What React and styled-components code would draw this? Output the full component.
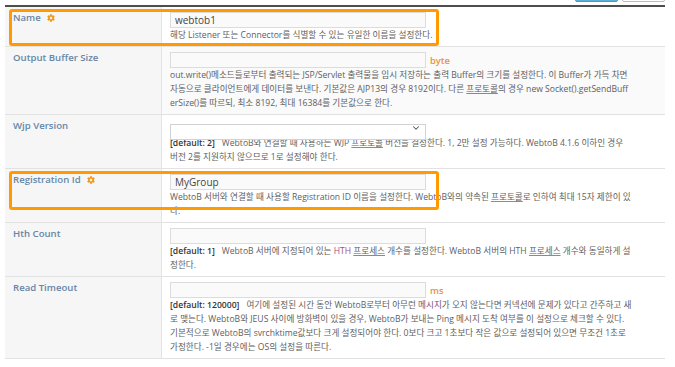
import React from 'react';
import styled, { createGlobalStyle } from 'styled-components';
import { FaCog } from 'react-icons/fa';
import { ChevronDown } from 'lucide-react';

const GlobalStyle = createGlobalStyle`
  body {
    margin: 0;
    background: #ffffff;
    font-family: "Open Sans", "Noto Sans CJK KR", sans-serif;
  }
`;

const Page = styled.div`
  width: 660px;
  padding-left: 5px;
`;

const Toolbar = styled.div`
  height: 5px;
  display: flex;
  justify-content: flex-end;
  align-items: flex-end;
  gap: 4px;
  overflow: hidden;
`;

const ToolButton = styled.button`
  flex: none;
  width: 43px;
  height: 20px;
  margin-bottom: 3px;
  border-radius: 2px;
  border: 1px solid ${(p) => (p.$primary ? '#4a9cc4' : '#bdbdbd')};
  background: ${(p) => (p.$primary ? '#5aaed6' : '#ffffff')};
`;

const Table = styled.div`
  border-top: 2px solid #4d4d4d;
`;

const Row = styled.div`
  position: relative;
  display: grid;
  grid-template-columns: 157px 1fr;
  border-bottom: 1px solid #e2e2e2;
`;

const Label = styled.div`
  display: flex;
  align-items: flex-start;
  gap: 6px;
  padding: 4px 8px;
  background: #f6f6f6;
  border-right: 1px solid #e4e4e4;
  font-size: 9.6px;
  font-weight: 600;
  line-height: 14px;
  color: #6686a8;
`;

const Gear = styled(FaCog)`
  margin-top: 3px;
  color: #f39a1e;
`;

const Value = styled.div`
  padding: 5px 6px 4px 8px;
  background: ${(p) => (p.$tint ? '#fafafa' : '#ffffff')};
`;

const Field = styled.div`
  display: flex;
  align-items: center;
  gap: 4px;
  height: 16px;
`;

const Input = styled.input`
  box-sizing: border-box;
  width: 256px;
  height: 16px;
  padding: 0 4px;
  border: 1px solid #dcdcdc;
  background: #fafafa;
  font-family: inherit;
  font-size: 10px;
  color: #444444;
  outline: none;
`;

const SelectBox = styled.div`
  position: relative;
  width: 256px;
  height: 16px;
`;

const Select = styled.select`
  box-sizing: border-box;
  appearance: none;
  width: 100%;
  height: 100%;
  border: 1px solid #d2d2d2;
  border-radius: 0;
  background: #ffffff;
`;

const Chevron = styled(ChevronDown)`
  position: absolute;
  right: 5px;
  top: 3px;
  color: #555555;
  pointer-events: none;
`;

const Unit = styled.span`
  font-size: 9.4px;
  font-weight: 600;
  color: #ec9238;
`;

const Desc = styled.div`
  font-size: 8.6px;
  line-height: 14px;
  color: #606060;
`;

const Line = styled.span`
  display: block;
  white-space: nowrap;
`;

const Default = styled.span`
  margin-right: 7px;
  font-weight: 600;
  color: #333333;
`;

const Term = styled.span`
  color: ${(p) => p.$tone || 'inherit'};
  text-decoration: ${(p) => (p.$plain ? 'none' : 'underline')};
  text-decoration-color: #8a8a8a;
  text-underline-offset: 1px;
`;

const Highlight = styled.div`
  position: absolute;
  top: 2px;
  left: 4px;
  width: 430px;
  height: ${(p) => p.$h}px;
  box-sizing: border-box;
  border: 3px solid #ff9a00;
  border-radius: 3px;
  pointer-events: none;
`;

const rows = [
  {
    label: 'Name',
    required: true,
    highlight: 37,
    field: { kind: 'input', value: 'webtob1' },
    lines: [<>해당 Listener 또는 Connector를 식별할 수 있는 유일한 이름을 설정한다.</>],
  },
  {
    label: 'Output Buffer Size',
    tint: true,
    field: { kind: 'input', value: '', unit: 'byte' },
    lines: [
      <>out.write()메소드들로부터 출력되는 JSP/Servlet 출력물을 임시 저장하는 출력 Buffer의 크기를 설정한다. 이 Buffer가 가득 차면</>,
      <>자동으로 클라이언트에게 데이터를 보낸다. 기본값은 AJP13의 경우 8192이다. 다른 <Term>프로토콜</Term>의 경우 new Socket().getSendBuff</>,
      <>erSize()를 따르되, 최소 8192, 최대 16384를 기본값으로 한다.</>,
    ],
  },
  {
    label: 'Wjp Version',
    field: { kind: 'select' },
    lines: [
      <><Default>[default: 2]</Default>WebtoB와 연결할 때 사용하는 WJP <Term>프로토콜</Term> 버전을 결정한다. 1, 2만 설정 가능하다. WebtoB 4.1.6 이하인 경우</>,
      <>버전 2를 지원하지 않으므로 1로 설정해야 한다.</>,
    ],
  },
  {
    label: 'Registration Id',
    required: true,
    highlight: 39,
    field: { kind: 'input', value: 'MyGroup' },
    lines: [
      <>WebtoB 서버와 연결할 때 사용할 Registration ID 이름을 설정한다. WebtoB와의 약속된 <Term>프로토콜</Term>로 인하여 최대 15자 제한이 있</>,
      <>다.</>,
    ],
  },
  {
    label: 'Hth Count',
    field: { kind: 'input', value: '' },
    lines: [
      <><Default>[default: 1]</Default>WebtoB 서버에 지정되어 있는 <Term $plain $tone="#a0507c">HTH</Term> <Term>프로세스</Term> 개수를 설정한다. WebtoB 서버의 HTH <Term>프로세스</Term> 개수와 동일하게 설</>,
      <>정한다.</>,
    ],
  },
  {
    label: 'Read Timeout',
    last: true,
    field: { kind: 'input', value: '', unit: 'ms' },
    lines: [
      <><Default>[default: 120000]</Default>여기에 설정된 시간 동안 WebtoB로부터 아무런 <Term $plain $tone="#6b5380">메시지</Term>가 오지 않는다면 커넥션에 문제가 있다고 간주하고 새</>,
      <>로 맺는다. WebtoB와 JEUS 사이에 방화벽이 있을 경우, WebtoB가 보내는 Ping 메시지 도착 여부를 이 설정으로 체크할 수 있다.</>,
      <>기본적으로 WebtoB의 svrchktime값보다 크게 설정되어야 한다. 0보다 크고 1초보다 작은 값으로 설정되어 있으면 무조건 1초로</>,
      <>가정한다. -1일 경우에는 OS의 설정을 따른다.</>,
    ],
  },
];

const FieldControl = ({ field }) => (
  <Field>
    {field.kind === 'select' ? (
      <SelectBox>
        <Select defaultValue="">
          <option value=""></option>
        </Select>
        <Chevron size={10} strokeWidth={2.5} />
      </SelectBox>
    ) : (
      <Input defaultValue={field.value} />
    )}
    {field.unit && <Unit>{field.unit}</Unit>}
  </Field>
);

const App = () => (
  <>
    <GlobalStyle />
    <Page>
      <Toolbar>
        <ToolButton $primary />
        <ToolButton />
      </Toolbar>
      <Table>
        {rows.map((row) => (
          <Row key={row.label}>
            <Label>
              {row.label}
              {row.required && <Gear size={8} />}
            </Label>
            <Value $tint={row.tint}>
              <FieldControl field={row.field} />
              <Desc>
                {row.lines.map((line, i) => (
                  <Line key={i}>{line}</Line>
                ))}
              </Desc>
            </Value>
            {row.highlight && <Highlight $h={row.highlight} />}
          </Row>
        ))}
      </Table>
    </Page>
  </>
);

export default App;
